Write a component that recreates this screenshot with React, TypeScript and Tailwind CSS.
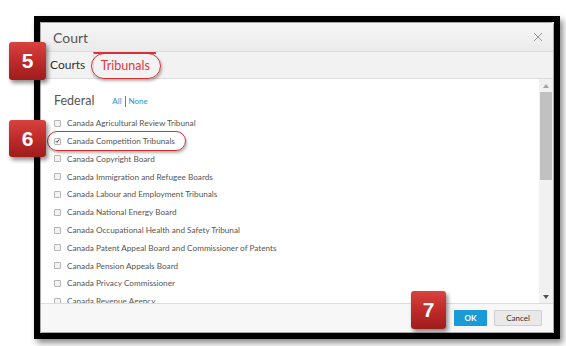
const tribunals = [
  "Canada Agricultural Review Tribunal",
  "Canada Competition Tribunals",
  "Canada Copyright Board",
  "Canada Immigration and Refugee Boards",
  "Canada Labour and Employment Tribunals",
  "Canada National Energy Board",
  "Canada Occupational Health and Safety Tribunal",
  "Canada Patent Appeal Board and Commissioner of Patents",
  "Canada Pension Appeals Board",
  "Canada Privacy Commissioner",
  "Canada Revenue Agency",
];

function StepBadge({ n, className }: { n: number; className: string }) {
  return (
    <div
      className={`absolute flex items-center justify-center rounded-[3px] bg-gradient-to-b from-[#d8423f] via-[#bf2b2a] to-[#9e1d1d] text-[21px] font-bold text-white shadow-[2px_3px_4px_rgba(0,0,0,0.45)] ${className}`}
      style={{ fontFamily: "'Liberation Sans', Arial, sans-serif" }}
    >
      {n}
    </div>
  );
}

export default function App() {
  return (
    <div
      className="relative h-[346px] w-[566px] overflow-hidden bg-white pl-[34px] pt-[16px]"
      style={{ fontFamily: "Lato, 'Open Sans', sans-serif" }}
    >
      <div className="h-[323px] w-[526px] border-[6px] border-black shadow-[3px_4px_6px_rgba(0,0,0,0.45)]">
        <div className="flex h-full flex-col rounded-tr-[3px] border border-[#a8a8a8] bg-white">
          {/* header */}
          <div className="flex h-[29px] shrink-0 items-center justify-between border-b border-[#dcdcdc] bg-gradient-to-b from-[#f6f6f6] to-[#ebebeb] pl-[12px] pr-[10px]">
            <span className="text-[14px] text-[#555]">Court</span>
            <svg width="10" height="10" viewBox="0 0 10 10" className="text-[#999]">
              <path d="M1 1L9 9M9 1L1 9" stroke="currentColor" strokeWidth="1" />
            </svg>
          </div>

          {/* tabs */}
          <div className="flex h-[27px] shrink-0 items-stretch border-b border-[#dcdcdc] bg-[#f2f2f2]">
            <div className="flex items-center pl-[9px] pr-[8px] text-[12px] text-[#333]">Courts</div>
            <div className="flex w-[63px] items-center justify-center border-l border-t-2 border-l-[#e0e0e0] border-t-[#d9363b] text-[12.5px] text-[#e0393e]">
              Tribunals
            </div>
          </div>

          {/* body */}
          <div className="flex min-h-0 flex-1">
            <div className="flex-1 overflow-hidden pl-[13px] pt-[12px]">
              <div className="flex h-[20px] items-center">
                <span className="text-[12.5px] text-[#555]">Federal</span>
                <span className="ml-[18px] text-[8px] text-[#2a8fd8]">All</span>
                <span className="mx-[3px] h-[11px] w-px bg-[#2a8fd8]" />
                <span className="text-[8px] text-[#2a8fd8]">None</span>
              </div>
              <ul className="mt-[3.5px]">
                {tribunals.map((t, i) => (
                  <li key={t} className="flex h-[17.8px] items-center">
                    <span className="flex h-[7px] w-[7px] items-center justify-center rounded-[1px] border border-[#b5b5b5] bg-[#f3f3f3]">
                      {i === 1 && (
                        <svg width="6" height="6" viewBox="0 0 6 6">
                          <path d="M1 3.2L2.4 4.6L5 1.2" stroke="#444" strokeWidth="1.2" fill="none" />
                        </svg>
                      )}
                    </span>
                    <span className="ml-[6px] text-[8.2px] text-[#555]">{t}</span>
                  </li>
                ))}
              </ul>
            </div>

            {/* scrollbar */}
            <div className="flex w-[14px] flex-col items-center bg-[#f1f1f1] pb-[4px] pt-[5px]">
              <svg width="6" height="4" viewBox="0 0 6 4">
                <path d="M0 4L3 0L6 4Z" fill="#a3a3a3" />
              </svg>
              <div className="mt-[4px] h-[88px] w-[12px] bg-[#c1c1c1]" />
              <div className="flex-1" />
              <svg width="6" height="4" viewBox="0 0 6 4">
                <path d="M0 0L3 4L6 0Z" fill="#505050" />
              </svg>
            </div>
          </div>

          {/* footer */}
          <div className="flex h-[29px] shrink-0 items-center justify-end gap-[7px] border-t border-[#dcdcdc] bg-[#f7f7f7] pr-[11px]">
            <button className="flex h-[16px] w-[33px] items-center justify-center rounded-[1px] bg-[#1a9bd7] text-[8px] font-bold text-white">
              OK
            </button>
            <button className="flex h-[16px] w-[48px] items-center justify-center rounded-[1px] border border-[#cfcfcf] bg-[#e9e9e9] text-[8px] text-[#333]">
              Cancel
            </button>
          </div>
        </div>
      </div>

      {/* annotations */}
      <div className="absolute left-[91px] top-[53px] h-[26px] w-[70px] rounded-full border-[1.5px] border-[#d32f2f] shadow-[1px_2px_3px_rgba(0,0,0,0.3)]" />
      <div className="absolute left-[47px] top-[131px] h-[20px] w-[139px] rounded-full border-[1.5px] border-[#d32f2f] shadow-[1px_2px_3px_rgba(0,0,0,0.3)]" />
      <StepBadge n={5} className="left-[9px] top-[42px] h-[38px] w-[37px]" />
      <StepBadge n={6} className="left-[9px] top-[120px] h-[37px] w-[37px]" />
      <StepBadge n={7} className="left-[411px] top-[291px] h-[38px] w-[35px]" />
    </div>
  );
}
